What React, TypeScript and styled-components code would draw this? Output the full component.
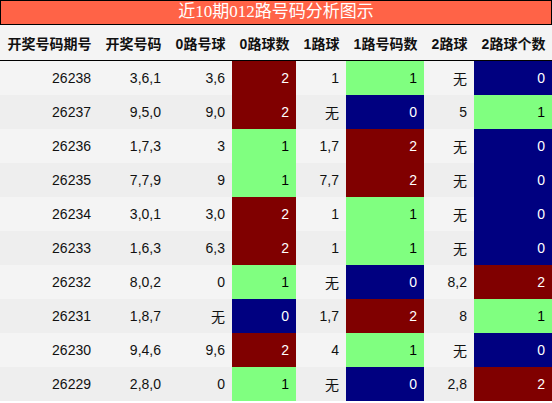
import React, { FC } from "react";
import styled, { createGlobalStyle } from "styled-components";

const GlobalStyle = createGlobalStyle`
  html, body {
    margin: 0;
    padding: 0;
    background: #ffffff;
  }
  body {
    font-family: "Liberation Sans", Arial, "Noto Sans CJK SC", sans-serif;
  }
`;

type Count = 0 | 1 | 2;

interface Draw {
  issue: string;
  numbers: string;
  road0: string;
  count0: Count;
  road1: string;
  count1: Count;
  road2: string;
  count2: Count;
}

const draws: Draw[] = [
  { issue: "26238", numbers: "3,6,1", road0: "3,6", count0: 2, road1: "1", count1: 1, road2: "无", count2: 0 },
  { issue: "26237", numbers: "9,5,0", road0: "9,0", count0: 2, road1: "无", count1: 0, road2: "5", count2: 1 },
  { issue: "26236", numbers: "1,7,3", road0: "3", count0: 1, road1: "1,7", count1: 2, road2: "无", count2: 0 },
  { issue: "26235", numbers: "7,7,9", road0: "9", count0: 1, road1: "7,7", count1: 2, road2: "无", count2: 0 },
  { issue: "26234", numbers: "3,0,1", road0: "3,0", count0: 2, road1: "1", count1: 1, road2: "无", count2: 0 },
  { issue: "26233", numbers: "1,6,3", road0: "6,3", count0: 2, road1: "1", count1: 1, road2: "无", count2: 0 },
  { issue: "26232", numbers: "8,0,2", road0: "0", count0: 1, road1: "无", count1: 0, road2: "8,2", count2: 2 },
  { issue: "26231", numbers: "1,8,7", road0: "无", count0: 0, road1: "1,7", count1: 2, road2: "8", count2: 1 },
  { issue: "26230", numbers: "9,4,6", road0: "9,6", count0: 2, road1: "4", count1: 1, road2: "无", count2: 0 },
  { issue: "26229", numbers: "2,8,0", road0: "0", count0: 1, road1: "无", count1: 0, road2: "2,8", count2: 2 },
];

const columns = [
  { label: "开奖号码期号", width: 98 },
  { label: "开奖号码", width: 70 },
  { label: "0路号球", width: 64 },
  { label: "0路球数", width: 64 },
  { label: "1路球", width: 50 },
  { label: "1路号码数", width: 78 },
  { label: "2路球", width: 50 },
  { label: "2路球个数", width: 78 },
];

const countColors: Record<Count, { bg: string; fg: string }> = {
  0: { bg: "#000080", fg: "#ffffff" },
  1: { bg: "#80ff80", fg: "#000000" },
  2: { bg: "#800000", fg: "#ffffff" },
};

const Wrapper = styled.div`
  width: 552px;
  height: 403px;
  overflow: hidden;
`;

const Title = styled.div`
  box-sizing: border-box;
  height: 25px;
  border: 1px solid #000;
  background-color: #ff6347;
  color: #ffffff;
  font-family: "Liberation Serif", "Noto Sans CJK SC", serif;
  font-size: 17px;
  line-height: 22px;
  text-align: center;
`;

const Table = styled.table`
  width: 552px;
  border-collapse: collapse;
  table-layout: fixed;
  font-size: 14px;
`;

const HeadCell = styled.th`
  height: 35px;
  padding: 0 0 0 1px;
  background-color: #f4f4f4;
  border-bottom: 1px solid #000;
  color: #111;
  font-weight: bold;
  font-size: 14px;
  text-align: center;
  white-space: nowrap;
`;

const Row = styled.tr<{ $odd: boolean }>`
  height: 34px;
  background-color: ${(p) => (p.$odd ? "#eeeeee" : "#f4f4f4")};
`;

const Cell = styled.td`
  padding: 0 7px 0 0;
  text-align: right;
  color: #111;
  white-space: nowrap;
`;

const CountCell = styled(Cell)<{ $count: Count }>`
  background-color: ${(p) => countColors[p.$count].bg};
  color: ${(p) => countColors[p.$count].fg};
`;

const App: FC = () => {
  return (
    <Wrapper>
      <GlobalStyle />
      <Title>近10期012路号码分析图示</Title>
      <Table>
        <colgroup>
          {columns.map((c) => (
            <col key={c.label} style={{ width: c.width }} />
          ))}
        </colgroup>
        <thead>
          <tr>
            {columns.map((c) => (
              <HeadCell key={c.label}>{c.label}</HeadCell>
            ))}
          </tr>
        </thead>
        <tbody>
          {draws.map((d, i) => (
            <Row key={d.issue} $odd={i % 2 === 1}>
              <Cell>{d.issue}</Cell>
              <Cell>{d.numbers}</Cell>
              <Cell>{d.road0}</Cell>
              <CountCell $count={d.count0}>{d.count0}</CountCell>
              <Cell>{d.road1}</Cell>
              <CountCell $count={d.count1}>{d.count1}</CountCell>
              <Cell>{d.road2}</Cell>
              <CountCell $count={d.count2}>{d.count2}</CountCell>
            </Row>
          ))}
        </tbody>
      </Table>
    </Wrapper>
  );
};

export default App;
